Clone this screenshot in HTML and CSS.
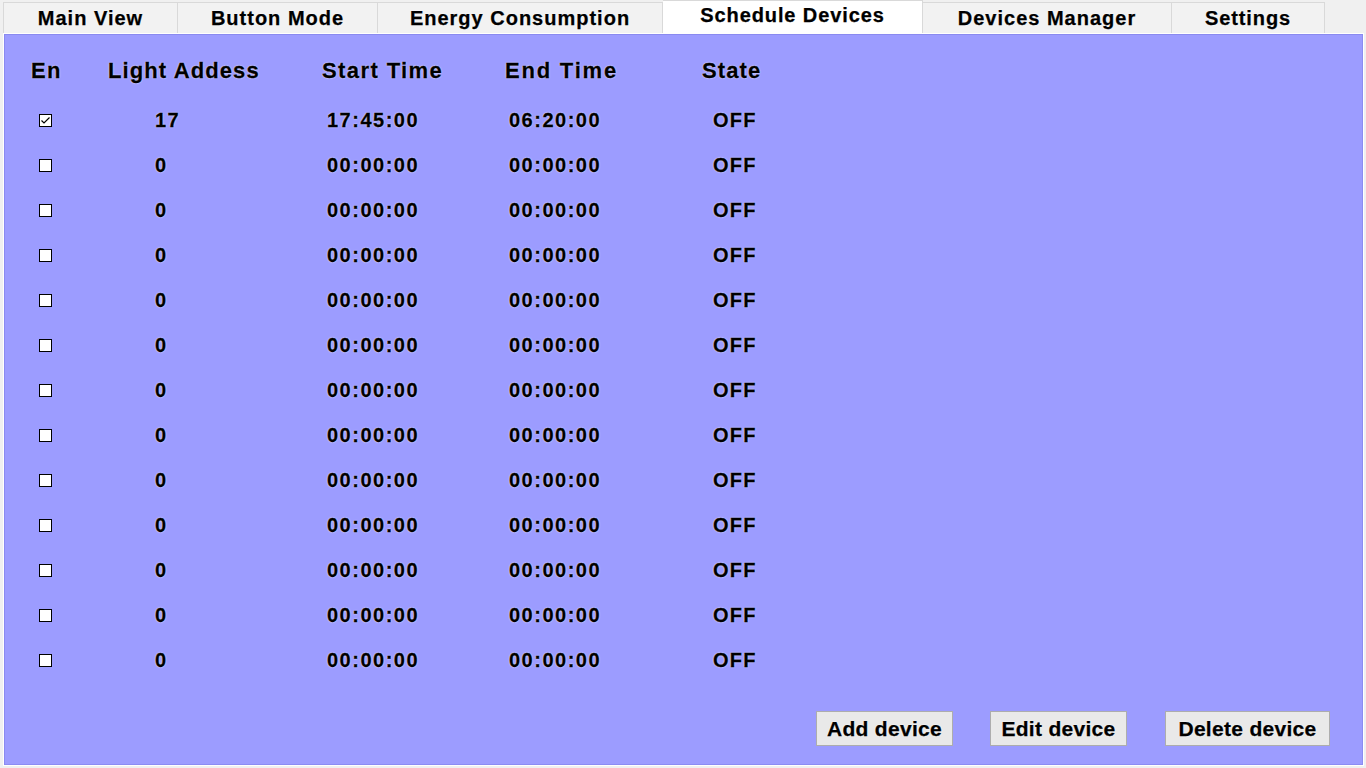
FILE: index.html
```html
<!DOCTYPE html>
<html>
<head>
<meta charset="utf-8">
<link rel="stylesheet" href="styles.css">
</head>
<body>
<div class="tabs">
  <div class="tab first w1">Main View</div>
  <div class="tab w2">Button Mode</div>
  <div class="tab w3">Energy Consumption</div>
  <div class="tab active w4">Schedule Devices</div>
  <div class="tab w5">Devices Manager</div>
  <div class="tab w6">Settings</div>
</div>
<div class="panel">
  <div class="row head">
    <div class="c1">En</div>
    <div class="c2">Light Addess</div>
    <div class="c3">Start Time</div>
    <div class="c4">End Time</div>
    <div class="c5">State</div>
  </div>
  <div class="rows">
    <div class="row data">
      <div class="c1"><span class="cb"><svg width="11" height="11" viewBox="0 0 11 11"><polyline points="1.5,5.5 4,8 9.5,2.5" fill="none" stroke="#000" stroke-width="1.2"/></svg></span></div>
      <div class="c2">17</div><div class="c3">17:45:00</div><div class="c4">06:20:00</div><div class="c5">OFF</div>
    </div>
    <div class="row data"><div class="c1"><span class="cb"></span></div><div class="c2">0</div><div class="c3">00:00:00</div><div class="c4">00:00:00</div><div class="c5">OFF</div></div>
    <div class="row data"><div class="c1"><span class="cb"></span></div><div class="c2">0</div><div class="c3">00:00:00</div><div class="c4">00:00:00</div><div class="c5">OFF</div></div>
    <div class="row data"><div class="c1"><span class="cb"></span></div><div class="c2">0</div><div class="c3">00:00:00</div><div class="c4">00:00:00</div><div class="c5">OFF</div></div>
    <div class="row data"><div class="c1"><span class="cb"></span></div><div class="c2">0</div><div class="c3">00:00:00</div><div class="c4">00:00:00</div><div class="c5">OFF</div></div>
    <div class="row data"><div class="c1"><span class="cb"></span></div><div class="c2">0</div><div class="c3">00:00:00</div><div class="c4">00:00:00</div><div class="c5">OFF</div></div>
    <div class="row data"><div class="c1"><span class="cb"></span></div><div class="c2">0</div><div class="c3">00:00:00</div><div class="c4">00:00:00</div><div class="c5">OFF</div></div>
    <div class="row data"><div class="c1"><span class="cb"></span></div><div class="c2">0</div><div class="c3">00:00:00</div><div class="c4">00:00:00</div><div class="c5">OFF</div></div>
    <div class="row data"><div class="c1"><span class="cb"></span></div><div class="c2">0</div><div class="c3">00:00:00</div><div class="c4">00:00:00</div><div class="c5">OFF</div></div>
    <div class="row data"><div class="c1"><span class="cb"></span></div><div class="c2">0</div><div class="c3">00:00:00</div><div class="c4">00:00:00</div><div class="c5">OFF</div></div>
    <div class="row data"><div class="c1"><span class="cb"></span></div><div class="c2">0</div><div class="c3">00:00:00</div><div class="c4">00:00:00</div><div class="c5">OFF</div></div>
    <div class="row data"><div class="c1"><span class="cb"></span></div><div class="c2">0</div><div class="c3">00:00:00</div><div class="c4">00:00:00</div><div class="c5">OFF</div></div>
    <div class="row data"><div class="c1"><span class="cb"></span></div><div class="c2">0</div><div class="c3">00:00:00</div><div class="c4">00:00:00</div><div class="c5">OFF</div></div>
  </div>
  <div class="actions">
    <button class="btn b-add">Add device</button>
    <button class="btn b-edit">Edit device</button>
    <button class="btn b-del">Delete device</button>
  </div>
</div>
</body>
</html>
```
FILE: styles.css
```css
* { box-sizing: border-box; }
html, body {
  margin: 0;
  padding: 0;
  background: #f0f0f0;
  width: 1366px;
  height: 768px;
  overflow: hidden;
  font-family: "Liberation Sans", Arial, sans-serif;
  font-weight: bold;
  color: #000;
}
.tabs {
  display: flex;
  align-items: flex-end;
  height: 33px;
  padding-left: 3px;
}
.tab {
  height: 31px;
  background: #f2f2f2;
  border-top: 1px solid #d9d9d9;
  border-right: 1px solid #d9d9d9;
  display: flex;
  align-items: center;
  justify-content: center;
  font-size: 20px;
  letter-spacing: 1px;
  -webkit-text-stroke: 0.25px #000;
  text-shadow: 0 0 2px rgba(255,255,255,0.9);
  padding-top: 1px;
}
.tab.first { border-left: 1px solid #d9d9d9; }
.tab.active {
  height: 33px;
  background: #ffffff;
  border-top: 1px solid #d9d9d9;
  padding-top: 0;
  padding-bottom: 4px;
  letter-spacing: 0.9px;
  position: relative;
  z-index: 1;
}
.w1 { width: 175px; }
.w2 { width: 200px; }
.w3 { width: 285px; }
.w4 { width: 260px; }
.w5 { width: 249px; }
.w6 { width: 153px; letter-spacing: 0.9px; }

.panel {
  margin-left: 3px;
  width: 1361px;
  height: 733px;
  border: 1px solid #ffffff;
  background: #9c9cff;
  box-shadow: inset 1px 1px 0 #8a8af0, inset -1px -1px 0 #8c8cf2;
  display: flex;
  flex-direction: column;
  padding-top: 14px;
}
.row {
  display: grid;
  grid-template-columns: 96px 200px 190px 200px 120px;
  align-items: center;
  height: 45px;
  text-shadow: 0 0 2px rgba(255,255,255,0.85), 0 0 1px rgba(255,255,255,0.6);
  -webkit-text-stroke: 0.3px #000;
  white-space: nowrap;
}
.head {
  font-size: 22px;
  letter-spacing: 1.3px;
  margin-bottom: 5px;
}
.head .c1 { padding-left: 27px; }
.head .c2 { padding-left: 8px; letter-spacing: 1.1px; }
.head .c3 { padding-left: 22px; letter-spacing: 1.4px; }
.head .c4 { padding-left: 15px; letter-spacing: 1.8px; }
.head .c5 { padding-left: 12px; letter-spacing: 1.1px; }

.data {
  font-size: 20px;
  letter-spacing: 1.5px;
}
.data .c1 { padding-left: 35px; display: flex; align-items: center; -webkit-text-stroke: 0; }
.data .c2 { padding-left: 55px; }
.data .c3 { padding-left: 27px; }
.data .c4 { padding-left: 19px; }
.data .c5 { padding-left: 23px; letter-spacing: 1.2px; }

.cb {
  width: 13px;
  height: 13px;
  background: #fff;
  border: 1px solid #000;
  display: flex;
  align-items: center;
  justify-content: center;
}
.cb svg { display: block; }

.actions {
  display: flex;
  justify-content: flex-end;
  gap: 37px;
  margin-top: 28px;
  padding-right: 33px;
}
.btn {
  height: 35px;
  background: #e9e9e9;
  border: 1px solid #adadad;
  border-radius: 0;
  font-family: "Liberation Sans", Arial, sans-serif;
  font-weight: bold;
  font-size: 21px;
  letter-spacing: 0.3px;
  -webkit-text-stroke: 0.25px #000;
  color: #000;
  padding: 0;
  text-shadow: 0 0 2px rgba(255,255,255,0.9);
}
.b-add { width: 137px; }
.b-edit { width: 137px; margin-right: 1px; }
.b-del { width: 165px; }
```
